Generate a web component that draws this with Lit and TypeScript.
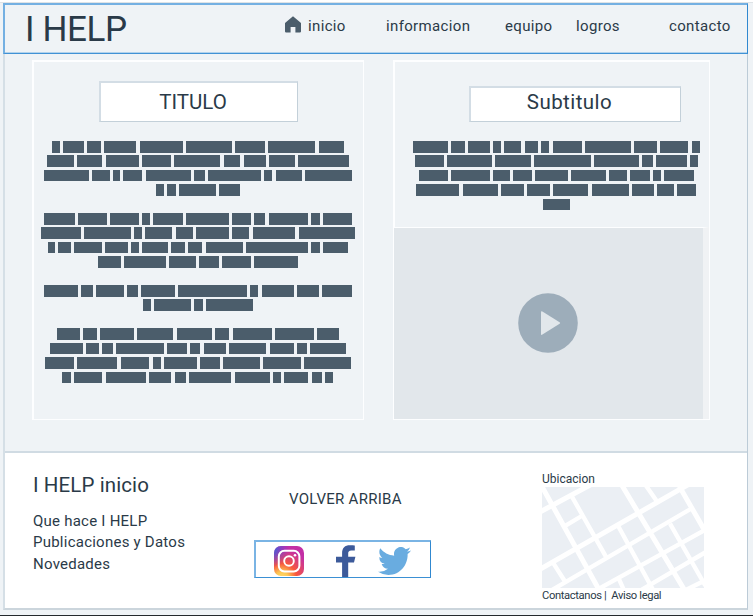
import { LitElement, html, css, svg } from "lit";
import { customElement, property } from "lit/decorators.js";

/** A line of placeholder words: overall length, then each word's length, in thirds of a pixel. */
type Line = [number, number[]];

const ARTICLE: Line[][] = [
  [
    [876, [24, 61, 41, 97, 129, 138, 88, 142, 76]],
    [906, [81, 75, 99, 86, 137, 50, 66, 77, 152]],
    [924, [135, 52, 21, 57, 137, 32, 158, 24, 78, 141]],
    [253, [25, 26, 111, 62]],
  ],
  [
    [924, [93, 85, 87, 24, 89, 129, 57, 33, 119, 25, 87]],
    [940, [118, 141, 24, 81, 52, 98, 52, 128, 168]],
    [899, [21, 37, 84, 68, 24, 77, 42, 42, 112, 186, 25, 74]],
    [599, [68, 127, 81, 59, 87, 131]],
  ],
  [
    [924, [102, 34, 84, 32, 100, 207, 24, 96, 65, 90]],
    [329, [24, 109, 26, 140]],
  ],
  [
    [847, [69, 42, 101, 108, 106, 42, 118, 115, 66]],
    [888, [99, 38, 33, 144, 59, 31, 68, 111, 72, 30, 108]],
    [917, [87, 120, 86, 24, 100, 59, 110, 113, 140]],
    [813, [26, 84, 121, 66, 33, 128, 106, 23, 72, 31, 25]],
  ],
];

const SUMMARY: Line[][] = [
  [
    [861, [105, 41, 66, 25, 51, 41, 24, 87, 138, 69, 85, 24]],
    [848, [88, 135, 106, 171, 137, 31, 93, 23]],
    [825, [87, 117, 51, 56, 100, 105, 54, 60, 24, 89]],
    [839, [129, 106, 69, 69, 105, 111, 67, 49, 58]],
    [81, [81]],
  ],
];

@customElement("block-text")
export class BlockText extends LitElement {
  @property({ attribute: false }) paragraphs: Line[][] = [];

  static styles = css`
    :host {
      display: flex;
      flex-direction: column;
      gap: 14.42px;
    }
    .paragraph {
      display: flex;
      flex-direction: column;
      align-items: center;
    }
    .line {
      display: flex;
      justify-content: space-between;
      height: 14.42px;
    }
    .word {
      height: 11.5px;
      background: #4b5d6b;
    }
  `;

  render() {
    return this.paragraphs.map(
      (lines) => html`<div class="paragraph">
        ${lines.map(
          ([total, words]) => html`<div class="line" style="width:${(total / 3).toFixed(2)}px">
            ${words.map((w) => html`<span class="word" style="width:${(w / 3).toFixed(2)}px"></span>`)}
          </div>`
        )}
      </div>`
    );
  }
}

const homeIcon = svg`<svg class="home" viewBox="0 0 16 17">
  <path d="M8 0.3 L16 7 V15.6 Q16 16.4 15.2 16.4 H10.4 V11 H5.6 V16.4 H0.8 Q0 16.4 0 15.6 V7 Z" fill="#4b5d6b"/>
</svg>`;

const playIcon = svg`<svg class="play" viewBox="0 0 60 60">
  <circle cx="30" cy="30" r="29.8" fill="#9dadba"/>
  <path d="M23 19.2 Q23 17.8 24.4 18.6 L41.6 29.2 Q42.8 30 41.6 30.8 L24.4 41.6 Q23 42.4 23 41 Z" fill="#e2e7eb"/>
</svg>`;

const instagramIcon = svg`<svg class="instagram" viewBox="0 0 30 30">
  <defs>
    <radialGradient id="warm" cx="8" cy="32" r="29" gradientUnits="userSpaceOnUse">
      <stop offset="0" stop-color="#ffdc70"/>
      <stop offset="0.22" stop-color="#fdc653"/>
      <stop offset="0.5" stop-color="#f8583c"/>
      <stop offset="1" stop-color="#c32fa5"/>
    </radialGradient>
    <radialGradient id="cool" cx="-4" cy="2" r="20" gradientUnits="userSpaceOnUse">
      <stop offset="0.2" stop-color="#3e62d4"/>
      <stop offset="1" stop-color="#7a35dd" stop-opacity="0"/>
    </radialGradient>
  </defs>
  <rect width="30" height="30" rx="7" fill="url(#warm)"/>
  <rect width="30" height="30" rx="7" fill="url(#cool)"/>
  <rect x="4.8" y="4.8" width="20.6" height="20.6" rx="5.6" fill="none" stroke="#fff" stroke-width="2"/>
  <circle cx="15" cy="15" r="4.8" fill="none" stroke="#fff" stroke-width="1.9"/>
  <circle cx="21" cy="9.2" r="1.3" fill="#fff"/>
</svg>`;

const facebookIcon = svg`<svg class="facebook" viewBox="0 0 20 32">
  <path d="M6.1 32 V17.4 H0 V11.7 H6.1 V8 C6.1 2.8 9 0.2 13.8 0.2 C16.2 0.2 18.2 0.4 18.8 0.5 V5.6 H15.4 C12.8 5.6 12.2 6.9 12.2 8.7 V11.7 H19.4 L18 17.4 H12.2 V32 Z" fill="#3c5a9a"/>
</svg>`;

const twitterIcon = svg`<svg class="twitter" viewBox="0 2.2 24 19.6" preserveAspectRatio="none">
  <path fill="#69ace0" d="M23.953 4.57a10 10 0 01-2.825.775 4.958 4.958 0 002.163-2.723c-.951.555-2.005.959-3.127 1.184a4.92 4.92 0 00-8.384 4.482C7.69 8.095 4.067 6.13 1.64 3.162a4.822 4.822 0 00-.666 2.475c0 1.71.87 3.213 2.188 4.096a4.904 4.904 0 01-2.228-.616v.06a4.923 4.923 0 003.946 4.827 4.996 4.996 0 01-2.212.085 4.936 4.936 0 004.604 3.417 9.867 9.867 0 01-6.102 2.105c-.39 0-.779-.023-1.17-.067a13.995 13.995 0 007.557 2.209c9.053 0 13.998-7.496 13.998-13.985 0-.21 0-.42-.015-.63A9.935 9.935 0 0024 4.59z"/>
</svg>`;

const mapPicture = svg`<svg class="map" viewBox="0 0 486 303" preserveAspectRatio="none">
  <rect width="486" height="303" fill="#ebeff4"/>
  <g stroke="#fff" fill="none">
    <path stroke-width="15" d="M-6 -12 L172 310 M238 -8 L428 310 M412 -2 L490 134"/>
    <path stroke-width="15" d="M-6 75 L152 -10 M-6 247 L447 -12"/>
    <path stroke-width="13" d="M86 22 L193 211 M312 -4 L344 42 M224 109 L334 310 M384 110 L490 296 M31 224 L70 285 M230 274 L246 310"/>
    <path stroke-width="13" d="M62 121 L124 84 M18 316 L446 66 M162 310 L490 128 M296 310 L490 196 M425 312 L490 280"/>
  </g>
</svg>`;

@customElement("app-root")
export class AppRoot extends LitElement {
  static styles = css`
    :host {
      display: block;
      box-sizing: border-box;
      height: 616px;
      padding: 0 5px 0 3px;
      overflow: hidden;
      background: #eff3f6;
      border-top: 2px solid #fff;
      border-bottom: 1px solid #24292d;
      box-shadow: inset 0 1px #dfe3e6;
      color: #2a3a48;
      font-family: Roboto, "Liberation Sans", sans-serif;
      white-space: nowrap;
    }
    * {
      box-sizing: border-box;
    }
    svg {
      display: block;
    }
    .page {
      display: flex;
      flex-direction: column;
      margin-top: 1px;
      height: 607px;
      border: solid;
      border-width: 0 1px 2px 2px;
      border-color: #c9d5de #bccbd7 #cbd5dc #d5dfe6;
    }
    .header {
      display: flex;
      flex: none;
      height: 51px;
      margin: 0 -1px 0 -2px;
      padding-left: 20px;
      border: solid;
      border-width: 2px 1px 1px 2px;
      border-color: #74b0e2 #3088d0 #4192d5 #74b0e2;
      box-shadow: inset 0 -1px #b3d3ec;
    }
    .brand {
      width: 260px;
      font-size: 35px;
      line-height: 49px;
      letter-spacing: -0.4px;
    }
    .nav {
      display: grid;
      grid-template-columns: 23px 78px 119px 71px 93px 70px;
      font-size: 15px;
      line-height: 42px;
      letter-spacing: 0.35px;
    }
    .home {
      width: 16px;
      height: 17px;
      margin-top: 11px;
    }
    .content {
      display: flex;
      align-items: flex-start;
      gap: 29px;
      flex: none;
      height: 397px;
      padding: 6px 0 0 27px;
    }
    .panel {
      display: flex;
      flex-direction: column;
      align-items: center;
      height: 360px;
      border: solid #fdfeff;
      border-width: 2px 1px 1px 2px;
    }
    .article {
      width: 332px;
      padding-top: 19px;
    }
    .article-text {
      margin-right: 1px;
    }
    .aside {
      width: 317px;
      padding-top: 24px;
    }
    .heading {
      flex: none;
      margin: 0;
      background: #fff;
      border: solid;
      border-width: 2px 1px 1px 2px;
      border-color: #d3dde5 #c3d0d9 #c3d0d9 #d3dde5;
      font-weight: 400;
      font-size: 20.5px;
      text-align: center;
    }
    .title {
      width: 199px;
      height: 41px;
      margin: 0 1px 19px 0;
      line-height: 39px;
      padding-right: 11px;
    }
    .subtitle {
      width: 212px;
      height: 36px;
      margin: 0 0 19px 46px;
      line-height: 28px;
      letter-spacing: 0.45px;
      padding-right: 12px;
    }
    .summary {
      height: 85.5px;
      margin-left: 8.5px;
    }
    .video {
      display: flex;
      align-items: center;
      justify-content: center;
      align-self: stretch;
      flex: 1;
      margin: 0 0 0 -1px;
      background: #e2e7eb;
      border-top: 1px solid #fdfeff;
      border-right: 6px solid #f0f2f4;
    }
    .play {
      width: 60px;
      height: 60px;
      margin-right: 1px;
    }
    .footer {
      display: grid;
      grid-template-columns: 221px 288px 1fr;
      flex: 1;
      padding-left: 28px;
      background: #fff;
      border-top: 2px solid #d0dbe3;
    }
    .footer-title {
      margin: 19px 0 12.5px;
      font-size: 20.5px;
      line-height: 26px;
      font-weight: 400;
      letter-spacing: 0.1px;
    }
    .link {
      font-size: 15px;
      line-height: 21.5px;
      letter-spacing: 0.24px;
    }
    .top-link {
      margin: 35px 0 0 35px;
      font-size: 15px;
      line-height: 22px;
      letter-spacing: 0.28px;
    }
    .social {
      display: flex;
      align-items: flex-start;
      width: 177px;
      height: 38px;
      margin-top: 30px;
      padding: 4px 0 0 18px;
      border: solid;
      border-width: 2px 1px 1px 2px;
      border-color: #7ab4e4 #3088d0 #3b90d4 #7ab4e4;
    }
    .instagram {
      width: 30px;
      height: 30px;
    }
    .facebook {
      width: 20px;
      height: 32px;
      margin: -1px 0 0 32px;
    }
    .twitter {
      width: 33px;
      height: 28px;
      margin: 1px 0 0 21.5px;
    }
    .location {
      font-size: 12px;
      line-height: 16px;
      padding-top: 18px;
    }
    .map {
      width: 162px;
      height: 101px;
    }
    .legal {
      display: flex;
      gap: 5px;
      font-size: 11.2px;
      line-height: 15px;
      letter-spacing: -0.36px;
    }
  `;

  render() {
    return html`
      <div class="page">
        <header class="header">
          <div class="brand">I HELP</div>
          <nav class="nav">
            ${homeIcon}
            <span>inicio</span>
            <span>informacion</span>
            <span>equipo</span>
            <span>logros</span>
            <span>contacto</span>
          </nav>
        </header>
        <main class="content">
          <section class="panel article">
            <h1 class="heading title">TITULO</h1>
            <block-text class="article-text" .paragraphs=${ARTICLE}></block-text>
          </section>
          <section class="panel aside">
            <h2 class="heading subtitle">Subtitulo</h2>
            <block-text class="summary" .paragraphs=${SUMMARY}></block-text>
            <div class="video">${playIcon}</div>
          </section>
        </main>
        <footer class="footer">
          <div>
            <h3 class="footer-title">I HELP inicio</h3>
            <div class="link">Que hace I HELP</div>
            <div class="link">Publicaciones y Datos</div>
            <div class="link">Novedades</div>
          </div>
          <div>
            <div class="top-link">VOLVER ARRIBA</div>
            <div class="social">${instagramIcon}${facebookIcon}${twitterIcon}</div>
          </div>
          <div>
            <div class="location">Ubicacion</div>
            ${mapPicture}
            <div class="legal"><span>Contactanos |</span><span>Aviso legal</span></div>
          </div>
        </footer>
      </div>
    `;
  }
}
